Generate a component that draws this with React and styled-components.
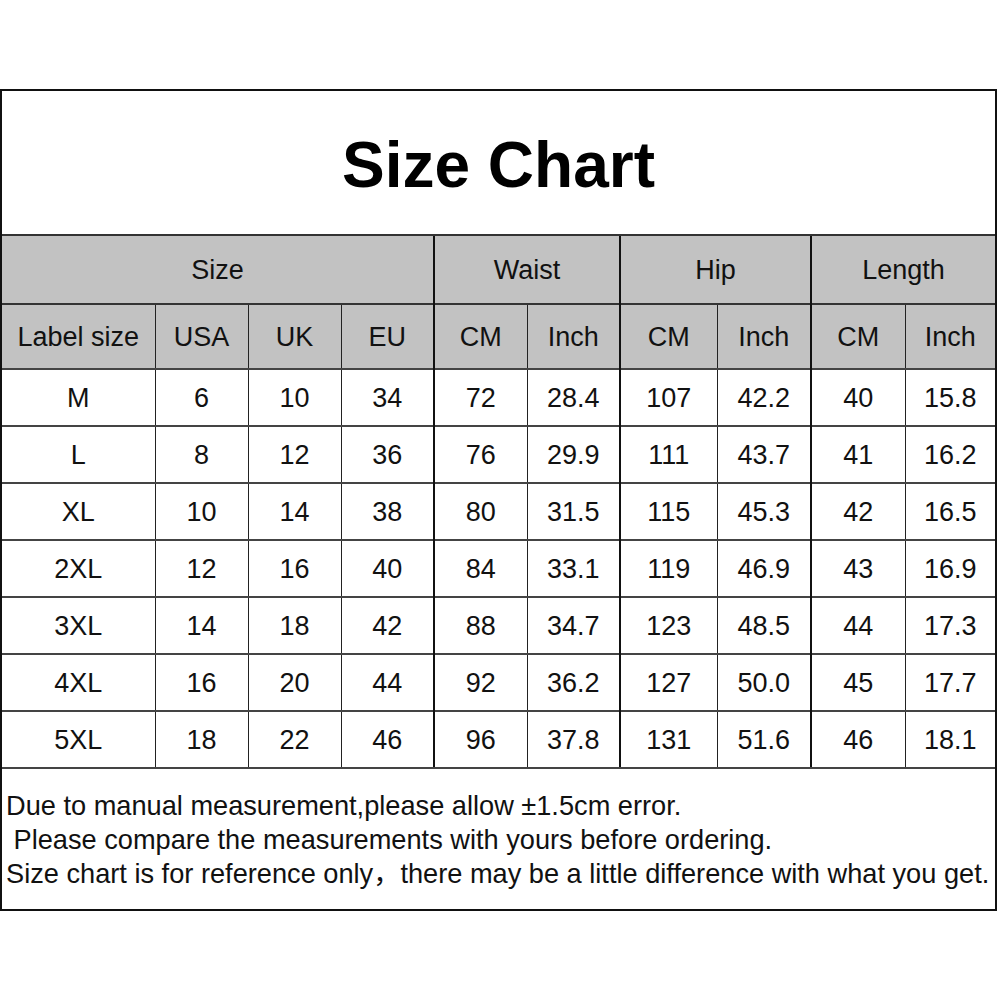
import styled, { createGlobalStyle } from 'styled-components';

const GlobalStyle = createGlobalStyle`
  html, body {
    margin: 0;
    padding: 0;
    background: #fff;
  }
  body {
    font-family: "Liberation Sans", Arial, "Noto Sans CJK SC", sans-serif;
    color: #111;
  }
`;

const Page = styled.div`
  width: 1000px;
  height: 1000px;
  padding-top: 89px;
  box-sizing: border-box;
`;

const Chart = styled.div`
  width: 997px;
  border: 2px solid #111;
  box-sizing: border-box;
`;

const Title = styled.h1`
  margin: 0;
  height: 143px;
  display: flex;
  align-items: center;
  justify-content: center;
  font-size: 64px;
  font-weight: bold;
  color: #000;
  padding-top: 5px;
  box-sizing: border-box;
`;

const Table = styled.table`
  width: 100%;
  table-layout: fixed;
  border-collapse: collapse;
  font-size: 27px;
`;

const HeadCell = styled.th`
  background: #c2c2c2;
  font-weight: normal;
  height: ${(p) => p.$h}px;
  padding: 2px 0 0;
  text-align: center;
  border-top: 2px solid #333;
  border-left: ${(p) => (p.$thick ? '2px solid #111' : '1px solid #222')};
  &:first-child {
    border-left: none;
  }
`;

const Cell = styled.td`
  height: 53px;
  padding: 2px 0 0;
  text-align: center;
  border-top: 2px solid #444;
  border-left: ${(p) => (p.$thick ? '2px solid #111' : '1px solid #222')};
  &:first-child {
    border-left: none;
  }
`;

const Notes = styled.div`
  border-top: 2px solid #444;
  padding: 20px 0 18px 4px;
  font-size: 27.2px;
  line-height: 34px;
  white-space: pre;
`;

const widths = [153, 93, 93, 93, 93, 93, 97, 94, 94, 90];
const thick = [false, false, false, false, true, false, true, false, true, false];

const groups = [
  { label: 'Size', span: 4 },
  { label: 'Waist', span: 2, thick: true },
  { label: 'Hip', span: 2, thick: true },
  { label: 'Length', span: 2, thick: true },
];

const subHeads = ['Label size', 'USA', 'UK', 'EU', 'CM', 'Inch', 'CM', 'Inch', 'CM', 'Inch'];

const rows = [
  ['M', '6', '10', '34', '72', '28.4', '107', '42.2', '40', '15.8'],
  ['L', '8', '12', '36', '76', '29.9', '111', '43.7', '41', '16.2'],
  ['XL', '10', '14', '38', '80', '31.5', '115', '45.3', '42', '16.5'],
  ['2XL', '12', '16', '40', '84', '33.1', '119', '46.9', '43', '16.9'],
  ['3XL', '14', '18', '42', '88', '34.7', '123', '48.5', '44', '17.3'],
  ['4XL', '16', '20', '44', '92', '36.2', '127', '50.0', '45', '17.7'],
  ['5XL', '18', '22', '46', '96', '37.8', '131', '51.6', '46', '18.1'],
];

const notes = [
  'Due to manual measurement,please allow ±1.5cm error.',
  ' Please compare the measurements with yours before ordering.',
  'Size chart is for reference only，there may be a little difference with what you get.',
];

export default function App() {
  return (
    <Page>
      <GlobalStyle />
      <Chart>
        <Title>Size Chart</Title>
        <Table>
          <colgroup>
            {widths.map((w, i) => (
              <col key={i} style={{ width: w }} />
            ))}
          </colgroup>
          <thead>
            <tr>
              {groups.map((g) => (
                <HeadCell key={g.label} colSpan={g.span} $h={65} $thick={g.thick}>
                  {g.label}
                </HeadCell>
              ))}
            </tr>
            <tr>
              {subHeads.map((h, i) => (
                <HeadCell key={i} $h={61} $thick={thick[i]}>
                  {h}
                </HeadCell>
              ))}
            </tr>
          </thead>
          <tbody>
            {rows.map((r) => (
              <tr key={r[0]}>
                {r.map((v, i) => (
                  <Cell key={i} $thick={thick[i]}>
                    {v}
                  </Cell>
                ))}
              </tr>
            ))}
          </tbody>
        </Table>
        <Notes>{notes.join('\n')}</Notes>
      </Chart>
    </Page>
  );
}
